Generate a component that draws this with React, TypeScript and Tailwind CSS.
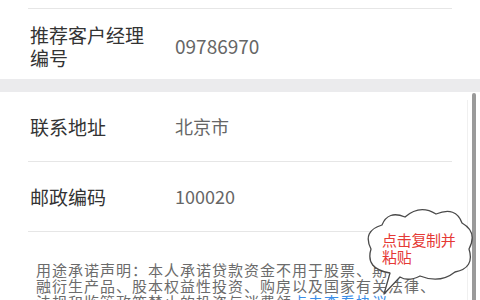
const font = { fontFamily: '"Noto Sans CJK SC", "Liberation Sans", sans-serif' };

function Row({ label, value, last }: { label: React.ReactNode; value: string; last?: boolean }) {
  return (
    <div className={`mx-[28px] flex h-[70px] items-center ${last ? "" : "border-b border-[#e6e6e6]"}`}>
      <div className="w-[147px] pl-[2px] text-[19px] leading-[23px] text-[#333]">{label}</div>
      <div className="text-[18px] text-[#666]">{value}</div>
    </div>
  );
}

function Cloud() {
  return (
    <div className="absolute left-[364px] top-[208px] h-[90px] w-[112px]">
      <svg viewBox="364 208 112 90" width="112" height="90" className="absolute inset-0">
        <path
          d="M390 273 Q365 269 371 249 Q362 231 382 225 Q388 210 405 217 Q420 204 436 214 Q456 206 462 223 Q478 232 469 249 Q475 268 455 272 Q440 284 420 276 Q408 282 400 277 L384 294 Z"
          fill="#fff"
          stroke="#4a4a4a"
          strokeWidth="1.3"
          strokeLinejoin="round"
        />
      </svg>
      <div className="absolute left-[18px] top-[23px] text-[15px] leading-[17px] tracking-[-0.3px] text-[#e53935]">
        点击复制并
        <br />
        粘贴
      </div>
    </div>
  );
}

export default function App() {
  return (
    <div className="relative h-[300px] w-[480px] overflow-hidden bg-white" style={font}>
      {/* top section */}
      <div className="pt-[8px]">
        <div className="mx-[28px] border-t border-[#e6e6e6]" />
        <div className="mx-[28px] flex h-[70px] items-center pt-[4px]">
          <div className="w-[147px] pl-[2px] text-[19px] leading-[23px] text-[#333]">
            推荐客户经理
            <br />
            编号
          </div>
          <div className="text-[19px] text-[#666]">09786970</div>
        </div>
      </div>

      <div className="h-[13px] bg-[#ebebed]" />

      <div>
        <Row label="联系地址" value="北京市" />
        <Row label="邮政编码" value="100020" />
        <div className="pl-[36px] pt-[30px]">
          <p className="w-[406px] text-[15px] leading-[16px] tracking-[1px] text-[#6b6b6b]">
            用途承诺声明：本人承诺贷款资金不用于股票、期货、金融衍生产品、股本权益性投资、购房以及国家有关法律、法规和监管政策禁止的投资与消费领<span className="text-[#3b8ee8]">点击查看协议</span>
          </p>
        </div>
      </div>

      {/* scrollbar */}
      <div className="absolute bottom-0 right-[4px] top-[93px] w-[4px] rounded-t-sm bg-[#9a9a9a]" />
      <div className="absolute bottom-0 right-[12px] top-[100px] w-px bg-[#f0f0f0]" />

      <Cloud />
    </div>
  );
}
